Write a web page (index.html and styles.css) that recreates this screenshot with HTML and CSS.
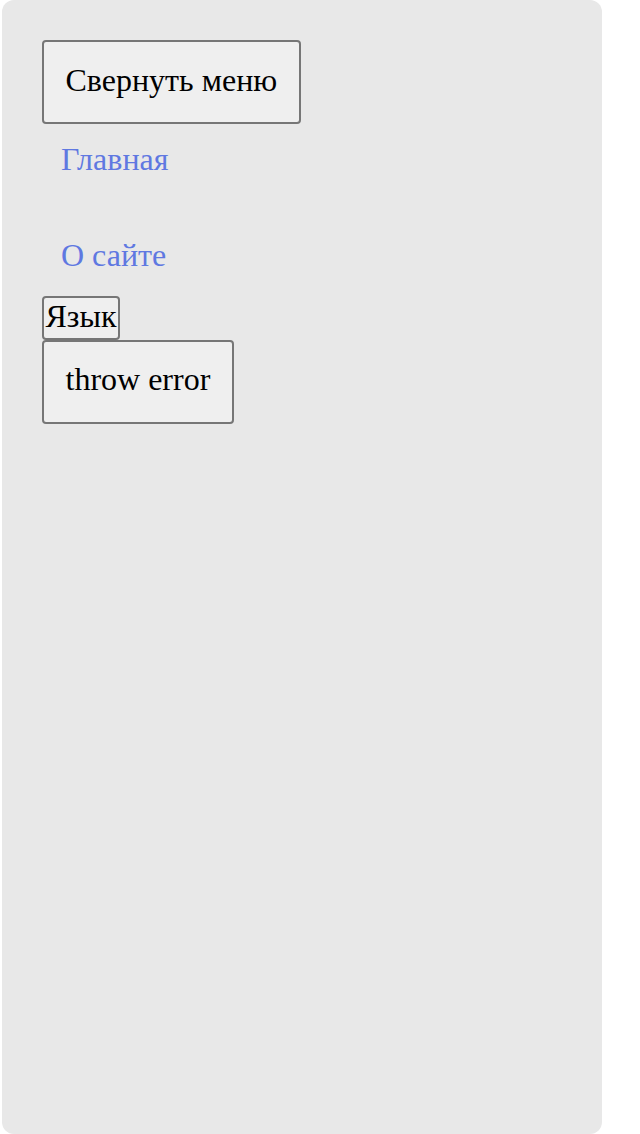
FILE: index.html
```html
<!DOCTYPE html>
<html lang="ru">
<head>
<meta charset="utf-8">
<title>Меню</title>
<link rel="stylesheet" href="styles.css">
</head>
<body>
<aside class="panel">
  <button class="btn btn-big" type="button">Свернуть меню</button>
  <nav class="nav">
    <a class="nav-link" href="#">Главная</a>
    <a class="nav-link" href="#">О сайте</a>
  </nav>
  <button class="btn btn-small" type="button">Язык</button>
  <button class="btn btn-big" type="button">throw error</button>
</aside>
</body>
</html>
```
FILE: styles.css
```css
html, body {
  margin: 0;
  padding: 0;
  background: #ffffff;
}
body {
  font-family: "Liberation Serif", "Times New Roman", serif;
  font-size: 32px;
}
.panel {
  box-sizing: border-box;
  margin-left: 2px;
  width: 600px;
  height: 1134px;
  background: #e8e8e8;
  border-radius: 12px;
  padding: 40px;
  display: flex;
  flex-direction: column;
  align-items: flex-start;
}
.btn {
  font-family: inherit;
  font-size: 32px;
  color: #000;
  background: #efefef;
  border: 2px solid #767676;
  border-radius: 4px;
  line-height: normal;
  margin: 0;
}
.btn-big {
  padding: 19.5px 21.5px 23.5px;
}
.btn-small {
  padding: 0 1.5px 3.2px;
}
.nav {
  display: flex;
  flex-direction: column;
  align-items: flex-start;
  gap: 59px;
  margin: 17px 0 21.5px;
  padding-left: 19px;
}
.nav-link {
  color: #5f78e1;
  text-decoration: none;
  line-height: normal;
}
```
